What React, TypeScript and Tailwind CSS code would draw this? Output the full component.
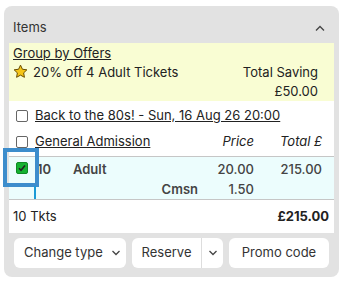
import React from "react";

const Chevron = ({ up = false, className = "" }: { up?: boolean; className?: string }) => (
  <svg width="10" height="6" viewBox="0 0 10 6" className={className}>
    <path d={up ? "M1 5.5 L5 1.5 L9 5.5" : "M1.5 1 L5 4.5 L8.5 1"} fill="none" stroke="#444" strokeWidth="1.3" />
  </svg>
);

const Star = () => (
  <svg width="15" height="15" viewBox="0 0 24 24" className="mr-[5px] -mt-[2px]">
    <path
      d="M12 1.8l3.1 6.6 7.1.9-5.2 4.9 1.3 7.1L12 17.8l-6.3 3.5 1.3-7.1L1.8 9.3l7.1-.9z"
      fill="#f5c518"
      stroke="#6b4e00"
      strokeWidth="1.6"
      strokeLinejoin="round"
    />
  </svg>
);

const Box = () => (
  <span className="inline-block w-[12px] h-[12px] rounded-[2px] border border-[#666] bg-white mr-[7px] shrink-0" />
);

const App: React.FC = (): React.ReactElement => {
  return (
    <div className="w-[345px] h-[286px] bg-white pt-[6px] font-['Inter',sans-serif] text-[13px] text-[#222]">
      <div className="ml-[4px] w-[335px] rounded-lg bg-[#e2e2e2] px-[5px] pb-[9px]">
        <div className="h-[37px] pt-[6px] flex items-center justify-between pl-[4px] pr-[9px] text-[#333]">
          <span>Items</span>
          <Chevron up />
        </div>

        <div className="bg-[#f9fdd3] pt-[1px] pl-[4px] pr-[16px] leading-[19px]">
          <div><span className="underline">Group by Offers</span></div>
          <div className="flex items-center justify-between">
            <span className="flex items-center"><Star />20% off 4 Adult Tickets</span>
            <span>Total Saving</span>
          </div>
          <div className="text-right">£50.00</div>
        </div>

        <div className="bg-white">
          <div className="h-[27px] pt-[3px] flex items-center pl-[7px]">
            <Box />
            <span className="underline">Back to the 80s! - Sun, 16 Aug 26 20:00</span>
          </div>
          <div className="h-[28px] flex items-center pl-[7px] pr-[12px]">
            <Box />
            <span className="underline">General Admission</span>
            <span className="ml-auto w-[60px] text-right italic">Price</span>
            <span className="w-[68px] text-right italic">Total £</span>
          </div>

          <div className="relative border-t border-b border-[#c6c6c6] bg-[#ecfdfd] pt-[2px] pr-[12px] leading-[20px] text-[#444]">
            <div className="flex">
              <span className="w-[26px] pl-[28px] box-content font-semibold">10</span>
              <span className="ml-[10px] font-semibold">Adult</span>
              <span className="ml-auto w-[60px] text-right font-medium">20.00</span>
              <span className="w-[68px] text-right font-medium">215.00</span>
            </div>
            <div className="flex">
              <span className="ml-auto font-semibold">Cmsn</span>
              <span className="w-[56px] text-right font-medium">1.50</span>
              <span className="w-[68px]" />
            </div>
            <div className="absolute left-[-6px] top-[-9px] w-[36px] h-[39px] border-[4px] border-[#3d8dcc] flex items-center justify-center pl-[2px]">
              <span className="w-[12px] h-[12px] rounded-[2px] bg-[#16b232] border border-[#0f8a24] flex items-center justify-center">
                <svg width="8" height="8" viewBox="0 0 8 8">
                  <path d="M1 4.2 L3 6.2 L7 1.5" fill="none" stroke="#222" strokeWidth="1.6" />
                </svg>
              </span>
            </div>
            <div className="absolute left-[25px] top-[29px] w-[2px] h-[13px] bg-[#1a9ad6]" />
          </div>

          <div className="h-[33px] flex items-center justify-between pl-[4px] pr-[5px]">
            <span>10 Tkts</span>
            <span className="font-bold">£215.00</span>
          </div>
        </div>

        <div className="mt-[5px] flex gap-[6px] pl-[5px] h-[30px] text-[#333]">
          <button className="w-[112px] rounded-md bg-white flex items-center pl-[10px] gap-[8px]">
            Change type <Chevron />
          </button>
          <div className="w-[91px] rounded-md bg-white flex">
            <button className="w-[70px] flex items-center justify-center border-r border-[#ddd]">Reserve</button>
            <button className="flex-1 flex items-center justify-center"><Chevron /></button>
          </div>
          <button className="w-[100px] rounded-md bg-white flex items-center justify-center">Promo code</button>
        </div>
      </div>
    </div>
  );
};

export default App;
